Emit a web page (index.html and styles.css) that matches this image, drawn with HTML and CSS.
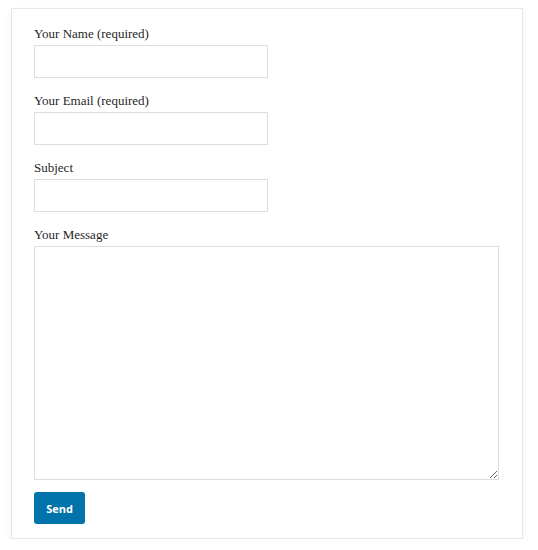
FILE: index.html
```html
<!DOCTYPE html>
<html lang="en">
<head>
  <meta charset="UTF-8">
  <meta name="viewport" content="width=device-width, initial-scale=1.0">
  <link rel="stylesheet" href="styles.css">
  <title>Contact</title>
</head>
<body>
  <main class="card">
    <form class="contact-form">
      <div class="field">
        <label for="your-name">Your Name (required)</label>
        <input type="text" id="your-name" name="your-name">
      </div>
      <div class="field">
        <label for="your-email">Your Email (required)</label>
        <input type="email" id="your-email" name="your-email">
      </div>
      <div class="field">
        <label for="your-subject">Subject</label>
        <input type="text" id="your-subject" name="your-subject">
      </div>
      <div class="field">
        <label for="your-message">Your Message</label>
        <textarea id="your-message" name="your-message"></textarea>
      </div>
      <button type="submit" class="send-button">Send</button>
    </form>
  </main>
</body>
</html>
```

FILE: styles.css
```css
:root {
  --color-border: hsl(0, 0%, 90%);
  --color-input-border: hsl(0, 0%, 87%);
  --color-text: hsl(0, 0%, 12%);
  --color-blue: #0073aa;
  --color-white: #fff;
}

* {
  margin: 0;
  padding: 0;
  box-sizing: border-box;
}

body {
  background-color: var(--color-white);
  padding: 8px 15px 0 11px;
  font-family: "Liberation Serif", "Times New Roman", serif;
  font-size: 13px;
  color: var(--color-text);
}

.card {
  border: 1px solid var(--color-border);
  padding: 15px 23px 14px 22px;
  box-shadow: 0 3px 8px rgba(0, 0, 0, 0.05);
}

.contact-form {
  display: flex;
  flex-direction: column;
  align-items: flex-start;
}

.field {
  display: flex;
  flex-direction: column;
  margin-bottom: 13px;
  width: 100%;
}

.field:last-of-type {
  margin-bottom: 12px;
}

label {
  line-height: 20px;
  margin-bottom: 1px;
}

input, textarea {
  font-family: inherit;
  font-size: inherit;
  border: 1px solid var(--color-input-border);
  border-radius: 0;
  background-color: var(--color-white);
  outline: none;
}

input {
  width: 234px;
  height: 33px;
  padding: 4px 8px;
}

textarea {
  width: 100%;
  height: 234px;
  padding: 6px 8px;
  resize: vertical;
}

.send-button {
  width: 51px;
  height: 32px;
  border: none;
  border-radius: 3px;
  background-color: var(--color-blue);
  color: var(--color-white);
  font-family: "Open Sans", "Noto Sans", sans-serif;
  font-size: 11px;
  font-weight: 700;
  cursor: pointer;
}
```
